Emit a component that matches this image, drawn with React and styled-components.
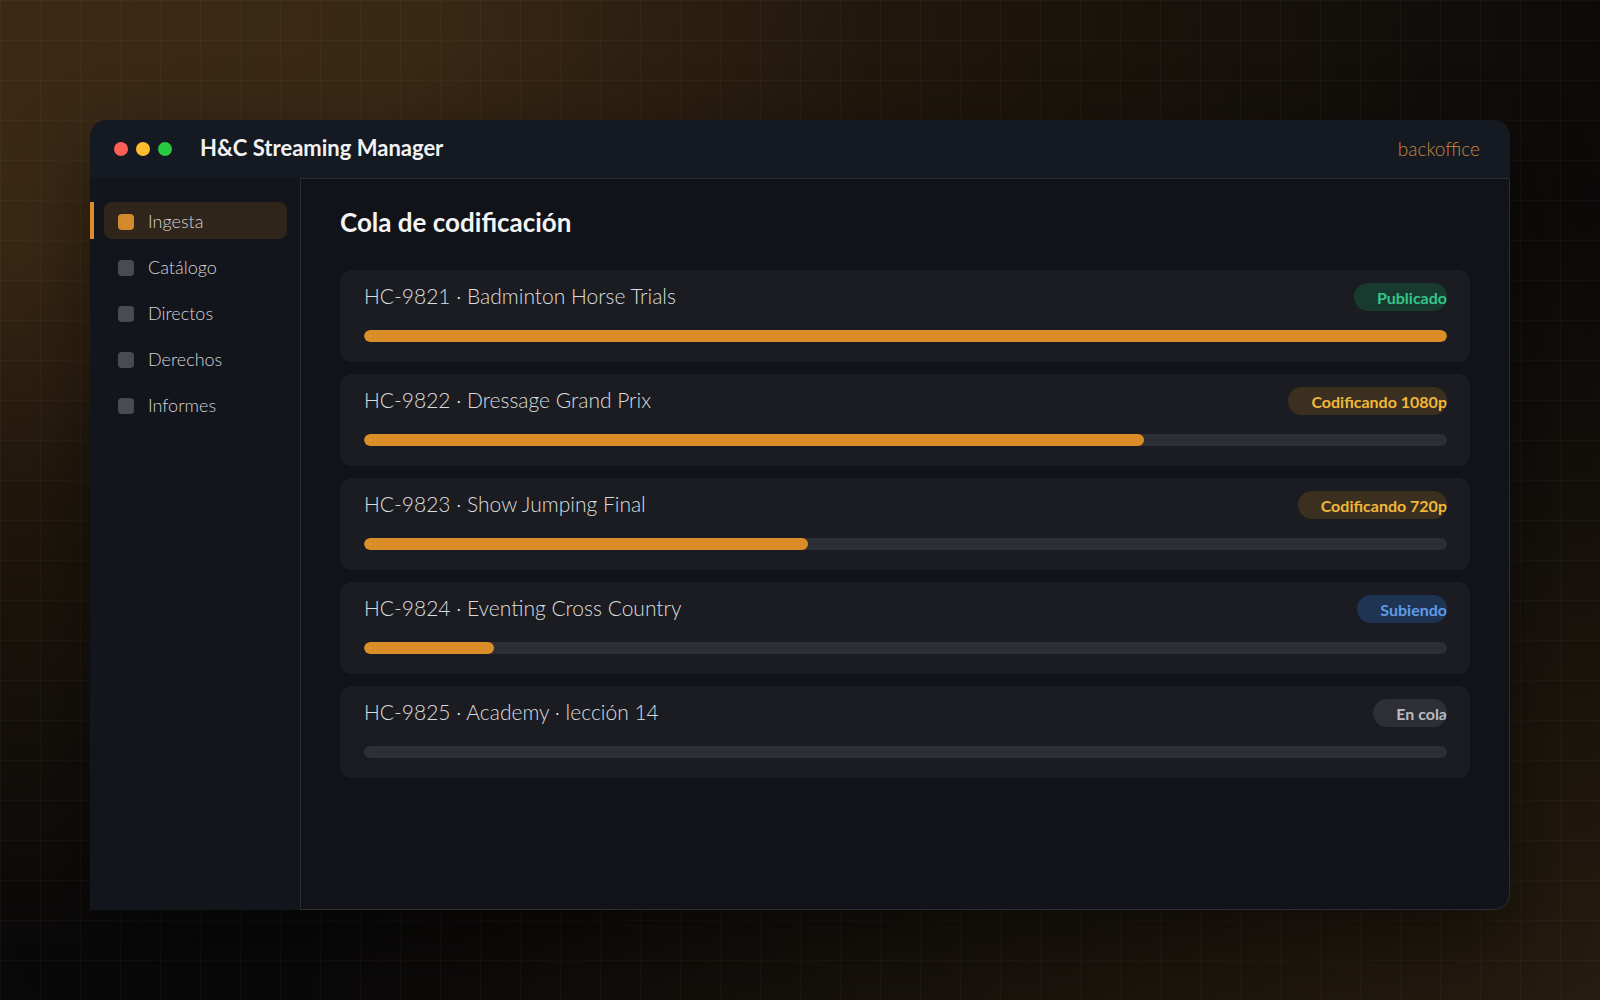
import React from "react";
import styled, { createGlobalStyle } from "styled-components";

const Global = createGlobalStyle`
  html, body { margin: 0; padding: 0; }
  body {
    width: 1600px;
    height: 1000px;
    overflow: hidden;
    font-family: Lato, "Open Sans", sans-serif;
    background-color: #0a0909;
  }
`;

const Stage = styled.div`
  width: 1600px;
  height: 1000px;
  box-sizing: border-box;
  padding: 120px 90px 90px;
  background-image:
    linear-gradient(rgba(255, 255, 255, 0.028) 1px, transparent 1px),
    linear-gradient(90deg, rgba(255, 255, 255, 0.028) 1px, transparent 1px),
    radial-gradient(ellipse 1700px 950px at 0% 0%, #3b2915 0%, #392814 25%, rgba(40, 28, 14, 0.75) 52%, rgba(10, 9, 9, 0) 100%),
    radial-gradient(ellipse 1300px 800px at 100% 100%, #261c10 0%, rgba(34, 25, 14, 0.7) 40%, rgba(10, 9, 9, 0) 100%);
  background-size: 40px 40px, 40px 40px, 100% 100%, 100% 100%;
  background-position: 0 0, 0 0, 0 0, 0 0;
  background-color: #0a0909;
`;

const Window = styled.div`
  width: 1420px;
  height: 790px;
  display: flex;
  flex-direction: column;
  border-radius: 16px;
  box-shadow: 0 30px 80px rgba(0, 0, 0, 0.45);
`;

const TitleBar = styled.div`
  height: 58px;
  flex: none;
  box-sizing: border-box;
  display: flex;
  align-items: center;
  padding: 0 30px 3px 24px;
  background: #151922;
  border-radius: 16px 16px 0 0;
`;

const Lights = styled.div`
  display: flex;
  gap: 8px;
  margin-right: 28px;
  margin-top: 3px;
`;

const Light = styled.span`
  width: 14px;
  height: 14px;
  border-radius: 50%;
  background: ${(p) => p.$c};
`;

const AppTitle = styled.div`
  font-family: Lato, sans-serif;
  font-weight: 700;
  font-size: 22px;
  color: #f2f2f2;
  flex: 1;
`;

const Tag = styled.div`
  font-family: Lato, sans-serif;
  font-weight: 300;
  font-size: 19px;
  color: #c5883b;
  margin-top: 2px;
`;

const Body = styled.div`
  flex: 1;
  display: flex;
  min-height: 0;
`;

const Sidebar = styled.nav`
  width: 210px;
  flex: none;
  background: #12151c;
  padding: 24px 13px 0 14px;
  box-sizing: border-box;
  display: flex;
  flex-direction: column;
  gap: 9px;
`;

const NavItem = styled.div`
  position: relative;
  height: 37px;
  display: flex;
  align-items: center;
  padding-left: 14px;
  gap: 14px;
  border-radius: 8px;
  background: ${(p) => (p.$active ? "#30251a" : "transparent")};
  font-family: Lato, sans-serif;
  font-weight: 300;
  font-size: 18px;
  color: #d4d4d8;
  &::before {
    content: "";
    display: ${(p) => (p.$active ? "block" : "none")};
    position: absolute;
    left: -14px;
    top: 0;
    bottom: 0;
    width: 4px;
    background: #db8d28;
  }
`;

const NavIcon = styled.span`
  width: 16px;
  height: 16px;
  border-radius: 4px;
  background: ${(p) => (p.$active ? "#d48a2c" : "#4a4b52")};
  flex: none;
  margin-top: 3px;
`;

const Main = styled.main`
  flex: 1;
  background: #111318;
  border: 1px solid #2b2d34;
  border-radius: 0 0 16px 0;
  padding: 26px 39px 0 39px;
  box-sizing: border-box;
`;

const Heading = styled.h1`
  margin: 0 0 31px;
  font-family: Lato, sans-serif;
  font-weight: 700;
  font-size: 26px;
  line-height: 34px;
  color: #f4f4f4;
`;

const List = styled.div`
  display: flex;
  flex-direction: column;
  gap: 12px;
`;

const Card = styled.div`
  background: #1b1c21;
  border-radius: 12px;
  padding: 13px 23px 20px 24px;
`;

const CardHead = styled.div`
  display: flex;
  align-items: flex-start;
  justify-content: space-between;
  margin-bottom: 19px;
`;

const JobTitle = styled.div`
  font-family: Lato, sans-serif;
  font-weight: 300;
  font-size: 21px;
  line-height: 26px;
  color: #dcdcdf;
  white-space: nowrap;
`;

const tones = {
  green: { bg: "#193a2f", fg: "#34c58a" },
  amber: { bg: "#3b301f", fg: "#f2b73a" },
  blue: { bg: "#1f3353", fg: "#5f9be6" },
  gray: { bg: "#2e2f36", fg: "#b9bac0" },
};

const Badge = styled.span`
  flex: none;
  height: 28px;
  display: inline-flex;
  align-items: center;
  padding: 0 0 0 23px;
  overflow: hidden;
  border-radius: 14px;
  background: ${(p) => tones[p.$tone].bg};
  color: ${(p) => tones[p.$tone].fg};
  font-family: Lato, sans-serif;
  font-weight: 700;
  font-size: 16px;
  white-space: nowrap;
`;

const Track = styled.div`
  height: 12px;
  border-radius: 6px;
  background: #2e2f35;
  overflow: hidden;
`;

const Fill = styled.div`
  height: 100%;
  border-radius: 6px;
  background: #db8d28;
`;

const nav = ["Ingesta", "Catálogo", "Directos", "Derechos", "Informes"];

const jobs = [
  { title: "HC-9821 · Badminton Horse Trials", status: "Publicado", tone: "green", pct: 100 },
  { title: "HC-9822 · Dressage Grand Prix", status: "Codificando 1080p", tone: "amber", pct: 72 },
  { title: "HC-9823 · Show Jumping Final", status: "Codificando 720p", tone: "amber", pct: 41 },
  { title: "HC-9824 · Eventing Cross Country", status: "Subiendo", tone: "blue", pct: 12 },
  { title: "HC-9825 · Academy · lección 14", status: "En cola", tone: "gray", pct: 0 },
];

export default function App() {
  return (
    <>
      <Global />
      <Stage>
        <Window>
          <TitleBar>
            <Lights>
              <Light $c="#ff5f57" />
              <Light $c="#febc2e" />
              <Light $c="#28c840" />
            </Lights>
            <AppTitle>H&amp;C Streaming Manager</AppTitle>
            <Tag>backoffice</Tag>
          </TitleBar>
          <Body>
            <Sidebar>
              {nav.map((n, i) => (
                <NavItem key={n} $active={i === 0}>
                  <NavIcon $active={i === 0} />
                  {n}
                </NavItem>
              ))}
            </Sidebar>
            <Main>
              <Heading>Cola de codificación</Heading>
              <List>
                {jobs.map((j) => (
                  <Card key={j.title}>
                    <CardHead>
                      <JobTitle>{j.title}</JobTitle>
                      <Badge $tone={j.tone}>{j.status}</Badge>
                    </CardHead>
                    <Track>
                      {j.pct > 0 && <Fill style={{ width: `${j.pct}%` }} />}
                    </Track>
                  </Card>
                ))}
              </List>
            </Main>
          </Body>
        </Window>
      </Stage>
    </>
  );
}
